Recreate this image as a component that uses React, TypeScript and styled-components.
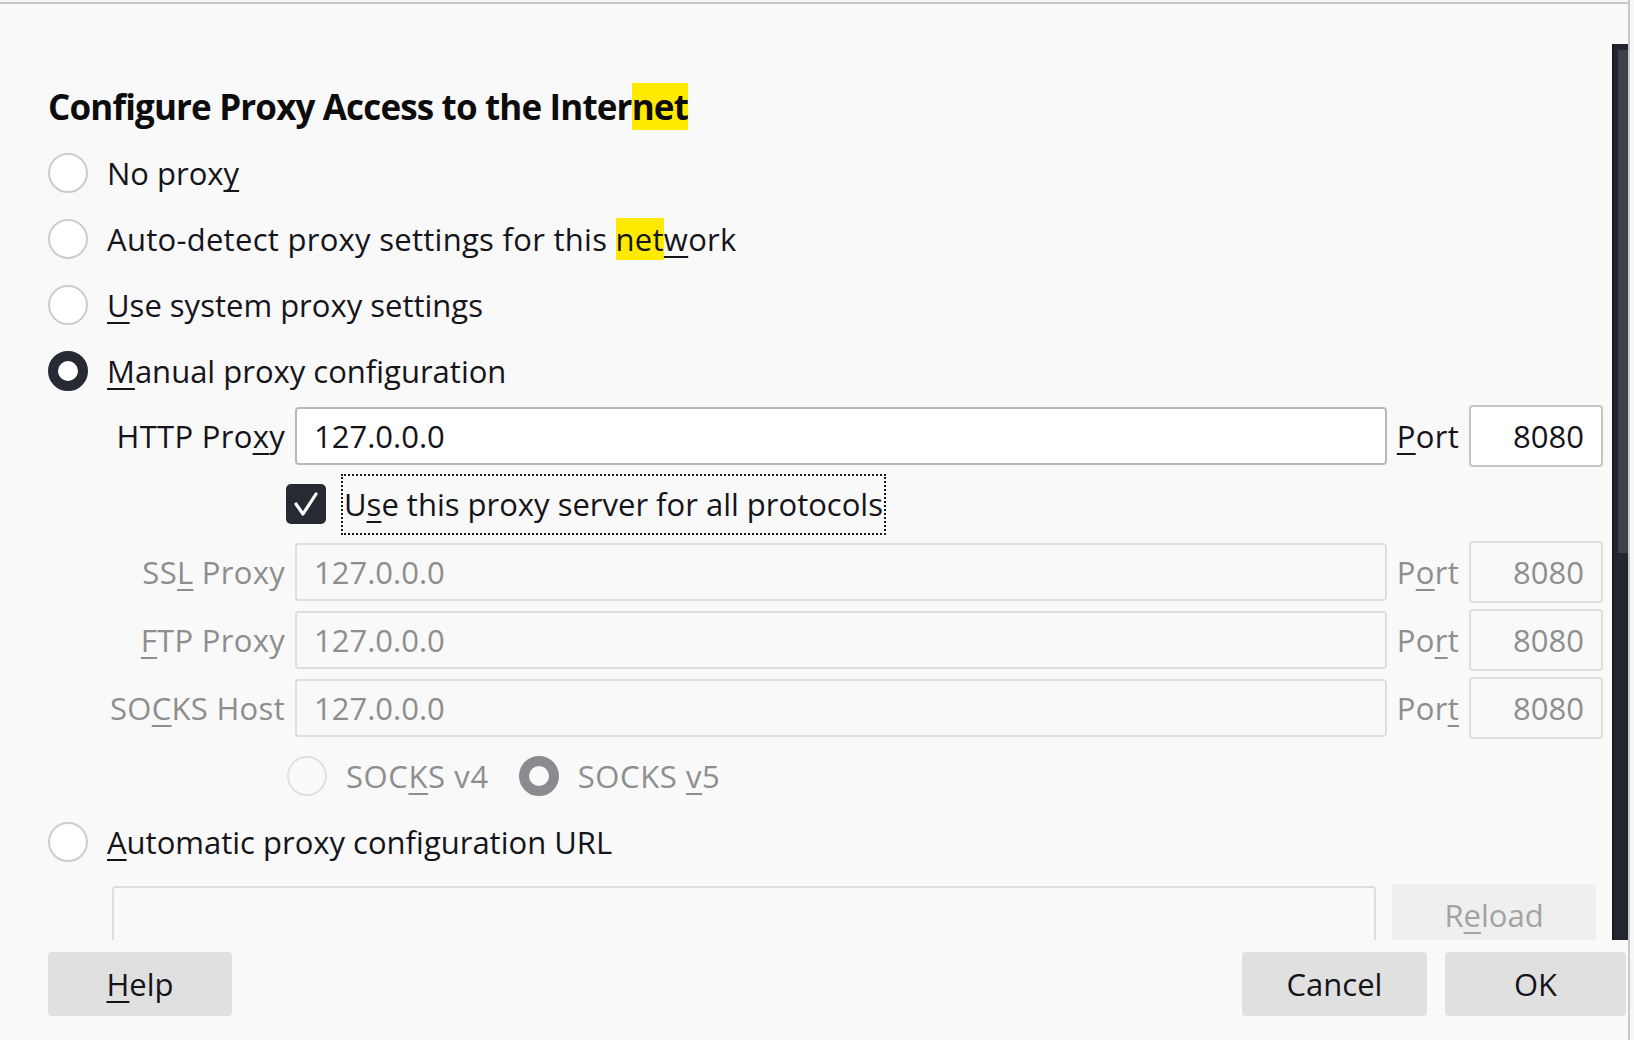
import React from 'react';
import styled, { createGlobalStyle } from 'styled-components';

const GlobalStyle = createGlobalStyle`
  html, body {
    margin: 0;
    padding: 0;
    background: #f6f6f6;
  }
  body {
    font-family: "Open Sans", "Noto Sans", sans-serif;
    color: #15141a;
  }
  #root {
    height: 1040px;
    overflow: hidden;
  }
`;

const Frame = styled.div`
  display: flex;
  width: 1634px;
  height: 1040px;
`;

const Dialog = styled.div`
  width: 1628px;
  display: flex;
  flex-direction: column;
  margin-top: 2px;
  border-top: 2px solid #c9c9c9;
  background: #f9f9f9;
`;

const EdgeLine = styled.div`
  width: 2px;
  background: #c9c9c9;
`;

const Body = styled.div`
  flex: 0 0 896px;
  margin-top: 40px;
  display: flex;
  overflow: hidden;
`;

const Content = styled.div`
  flex: 1;
  padding: 40px 9px 0 48px;
  overflow: hidden;
`;

const Scrollbar = styled.div`
  width: 16px;
  box-sizing: border-box;
  padding: 6px 0 0 4px;
  background: #23262e;
  border-left: 2px solid #17191e;
`;

const Thumb = styled.div`
  height: 503px;
  background: #3e414b;
`;

const Title = styled.h1`
  margin: 0 0 11px;
  font-size: 35px;
  font-weight: 700;
  line-height: 45px;
  letter-spacing: -0.85px;
  color: #0c0c0d;
`;

const Mark = styled.span`
  background: #ffea00;
`;

const Key = styled.span`
  text-decoration: underline;
  text-decoration-thickness: 2px;
  text-underline-offset: 5px;
  text-decoration-skip-ink: none;
`;

const OptionRow = styled.div<{ $disabled?: boolean; $indent?: number }>`
  display: flex;
  align-items: center;
  height: 66px;
  margin-left: ${p => p.$indent ?? 0}px;
  font-size: 31px;
  line-height: 40px;
  color: ${p => (p.$disabled ? '#8e8e8e' : '#15141a')};
`;

const Option = styled.label<{ $spacing?: number }>`
  display: flex;
  align-items: center;
  gap: 19px;
  margin-right: 30px;
  white-space: nowrap;
  letter-spacing: ${p => p.$spacing ?? 0}px;
`;

const Radio = styled.span<{ $checked?: boolean; $disabled?: boolean }>`
  flex: none;
  width: 40px;
  height: 40px;
  box-sizing: border-box;
  border-radius: 50%;
  background: ${p => (p.$disabled ? '#fafafa' : '#ffffff')};
  border: ${p =>
    p.$checked
      ? `10px solid ${p.$disabled ? '#8a8b90' : '#262a33'}`
      : `2px solid ${p.$disabled ? '#e0e0e0' : '#cdcdcd'}`};
`;

const ProxyGrid = styled.div`
  display: grid;
  grid-template-columns: 190px 1fr auto 134px;
  grid-auto-rows: 62px;
  column-gap: 10px;
  row-gap: 6px;
  align-items: center;
  margin: 1px 0 0 47px;
  font-size: 31px;
  line-height: 40px;
`;

const FieldLabel = styled.span<{ $disabled?: boolean }>`
  text-align: right;
  white-space: nowrap;
  letter-spacing: 0.3px;
  color: ${p => (p.$disabled ? '#8e8e8e' : '#15141a')};
`;

const Field = styled.input<{ $port?: boolean }>`
  box-sizing: border-box;
  width: 100%;
  height: ${p => (p.$port ? 62 : 58)}px;
  margin: 0;
  padding: ${p => (p.$port ? '0 17px 0 0' : '0 0 0 17px')};
  text-align: ${p => (p.$port ? 'right' : 'left')};
  font: inherit;
  color: #15141a;
  background: #ffffff;
  border: 2px solid ${p => (p.$port ? '#c4c4c4' : '#b9b9b9')};
  border-radius: 4px;
  outline: none;

  &:disabled {
    color: #8e8e8e;
    background: #f9f9f9;
    border-color: #dedede;
  }
`;

const CheckRow = styled.div`
  grid-column: 2 / -1;
  display: flex;
  align-items: center;
  gap: 15px;
  margin-left: -9px;
`;

const Checkbox = styled.span`
  flex: none;
  display: flex;
  width: 40px;
  height: 40px;
  border-radius: 5px;
  background: #262a33;
`;

const FocusLabel = styled.span`
  display: flex;
  align-items: center;
  height: 61px;
  box-sizing: border-box;
  padding: 0 1px;
  border: 2px dotted #1a1a1a;
  white-space: nowrap;
`;

const UrlRow = styled.div`
  display: flex;
  align-items: center;
  gap: 16px;
  margin: 9px 7px 0 64px;
`;

const UrlField = styled.input`
  flex: 1;
  box-sizing: border-box;
  height: 58px;
  margin: 0;
  background: #f9f9f9;
  border: 2px solid #dedede;
  border-radius: 4px;
`;

const Button = styled.button<{ $disabled?: boolean; $width?: number }>`
  flex: none;
  width: ${p => p.$width ?? 184}px;
  height: ${p => (p.$disabled ? 62 : 64)}px;
  padding: 0;
  font-family: inherit;
  font-size: 31px;
  color: ${p => (p.$disabled ? '#a3a3a3' : '#15141a')};
  background: ${p => (p.$disabled ? '#efefef' : '#e0e0e0')};
  border: none;
  border-radius: 4px;
`;

const Footer = styled.div`
  flex: 1;
  display: flex;
  align-items: flex-start;
  gap: 18px;
  padding: 12px 2px 0 48px;
`;

const Spacer = styled.div`
  flex: 1;
`;

const proxies = [
  { label: <>SS<Key>L</Key> Proxy</>, port: <>P<Key>o</Key>rt</> },
  { label: <><Key>F</Key>TP Proxy</>, port: <>Po<Key>r</Key>t</> },
  { label: <>SO<Key>C</Key>KS Host</>, port: <>Por<Key>t</Key></> },
];

const CheckMark = () => (
  <svg width="40" height="40" viewBox="0 0 40 40">
    <polyline points="10,20 17,30 30,10" fill="none" stroke="#ffffff" strokeWidth="3.2" strokeLinecap="round" strokeLinejoin="round" />
  </svg>
);

const App = () => {
  return (
    <Frame>
      <GlobalStyle />
      <Dialog>
        <Body>
          <Content>
            <Title>
              Configure Proxy Access to the Inter<Mark>net</Mark>
            </Title>
            <OptionRow>
              <Option><Radio /><span>No prox<Key>y</Key></span></Option>
            </OptionRow>
            <OptionRow>
              <Option $spacing={0.28}><Radio /><span>Auto-detect proxy settings for this <Mark>net</Mark><Key>w</Key>ork</span></Option>
            </OptionRow>
            <OptionRow>
              <Option><Radio /><span><Key>U</Key>se system proxy settings</span></Option>
            </OptionRow>
            <OptionRow>
              <Option><Radio $checked /><span><Key>M</Key>anual proxy configuration</span></Option>
            </OptionRow>

            <ProxyGrid>
              <FieldLabel>HTTP Pro<Key>x</Key>y</FieldLabel>
              <Field value="127.0.0.0" readOnly />
              <FieldLabel><Key>P</Key>ort</FieldLabel>
              <Field $port value="8080" readOnly />

              <CheckRow>
                <Checkbox><CheckMark /></Checkbox>
                <FocusLabel><span>U<Key>s</Key>e this proxy server for all protocols</span></FocusLabel>
              </CheckRow>

              {proxies.map((p, i) => (
                <React.Fragment key={i}>
                  <FieldLabel $disabled>{p.label}</FieldLabel>
                  <Field value="127.0.0.0" disabled readOnly />
                  <FieldLabel $disabled>{p.port}</FieldLabel>
                  <Field $port value="8080" disabled readOnly />
                </React.Fragment>
              ))}
            </ProxyGrid>

            <OptionRow $disabled $indent={239} style={{ marginTop: 4 }}>
              <Option $spacing={0.6}><Radio $disabled /><span>SOC<Key>K</Key>S v4</span></Option>
              <Option $spacing={0.6}><Radio $disabled $checked /><span>SOCKS <Key>v</Key>5</span></Option>
            </OptionRow>

            <OptionRow>
              <Option><Radio /><span><Key>A</Key>utomatic proxy configuration URL</span></Option>
            </OptionRow>

            <UrlRow>
              <UrlField disabled />
              <Button $disabled $width={204}>R<Key>e</Key>load</Button>
            </UrlRow>
          </Content>
          <Scrollbar>
            <Thumb />
          </Scrollbar>
        </Body>
        <Footer>
          <Button><Key>H</Key>elp</Button>
          <Spacer />
          <Button $width={185}>Cancel</Button>
          <Button $width={181}>OK</Button>
        </Footer>
      </Dialog>
      <EdgeLine />
    </Frame>
  );
};

export default App;
